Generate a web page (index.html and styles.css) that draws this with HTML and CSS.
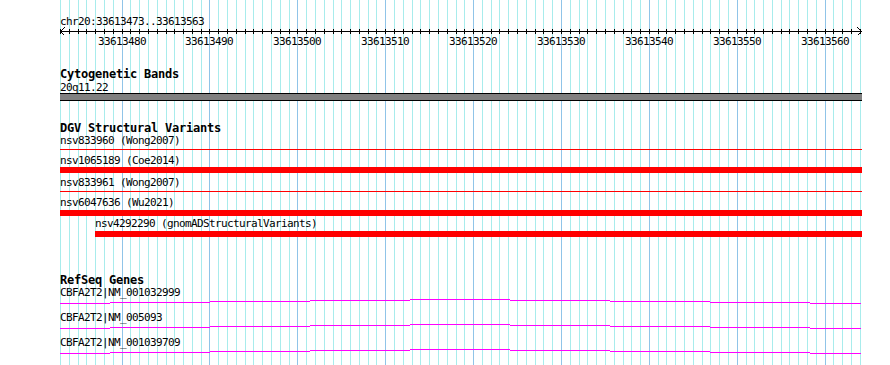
FILE: index.html
```html
<!DOCTYPE html>
<html lang="en">
<head>
<meta charset="UTF-8">
<title>chr20:33613473..33613563</title>
<link rel="stylesheet" href="styles.css">
</head>
<body>
<div class="panel">
  <!-- grid lines, one per base; filled in by script.js -->
  <svg class="grid" width="802" height="365"></svg>

  <svg class="ruler" width="802" height="50">
    <text class="ruler-title" x="0" y="25">chr20:33613473..33613563</text>
    <path class="axis" d="M0 31.5H801M4.5 27.5L0.5 31.5L4.5 35.5M797.5 27.5L801.5 31.5L797.5 35.5"/>
    <g class="ticks"></g>
    <g class="tick-labels">
      <text x="62" y="45">33613480</text>
      <text x="149" y="45">33613490</text>
      <text x="237" y="45">33613500</text>
      <text x="325" y="45">33613510</text>
      <text x="413" y="45">33613520</text>
      <text x="501" y="45">33613530</text>
      <text x="589" y="45">33613540</text>
      <text x="677" y="45">33613550</text>
      <text x="765" y="45">33613560</text>
    </g>
  </svg>

  <section class="track cyto">
    <h2 class="track-title">Cytogenetic Bands</h2>
    <div class="feature-label">20q11.22</div>
    <div class="band"></div>
  </section>

  <section class="track dgv">
    <h2 class="track-title">DGV Structural Variants</h2>
    <div class="sv sv-1">
      <div class="feature-label">nsv833960 (Wong2007)</div>
      <div class="sv-line"></div>
    </div>
    <div class="sv sv-2">
      <div class="feature-label">nsv1065189 (Coe2014)</div>
      <div class="sv-bar"></div>
    </div>
    <div class="sv sv-3">
      <div class="feature-label">nsv833961 (Wong2007)</div>
      <div class="sv-line"></div>
    </div>
    <div class="sv sv-4">
      <div class="feature-label">nsv6047636 (Wu2021)</div>
      <div class="sv-bar"></div>
    </div>
    <div class="sv sv-5">
      <div class="feature-label">nsv4292290 (gnomADStructuralVariants)</div>
      <div class="sv-bar"></div>
    </div>
  </section>

  <section class="track refseq">
    <h2 class="track-title">RefSeq Genes</h2>
    <div class="gene">
      <div class="feature-label">CBFA2T2|NM_001032999</div>
      <svg class="intron" width="802" height="12"><path d="M0 4.5H50M50 3.5H150M150 2.5H250M250 1.5H350M350 0.5H450M450 1.5H550M550 2.5H650M650 3.5H750M750 4.5H801"/></svg>
    </div>
    <div class="gene">
      <div class="feature-label">CBFA2T2|NM_005093</div>
      <svg class="intron" width="802" height="12"><path d="M0 4.5H50M50 3.5H150M150 2.5H250M250 1.5H350M350 0.5H450M450 1.5H550M550 2.5H650M650 3.5H750M750 4.5H801"/></svg>
    </div>
    <div class="gene">
      <div class="feature-label">CBFA2T2|NM_001039709</div>
      <svg class="intron" width="802" height="12"><path d="M0 4.5H50M50 3.5H150M150 2.5H250M250 1.5H350M350 0.5H450M450 1.5H550M550 2.5H650M650 3.5H750M750 4.5H801"/></svg>
    </div>
  </section>
</div>
<script src="script.js"></script>
</body>
</html>
```

FILE: styles.css
```css
body {
  margin: 0;
  background: #fff;
  color: #000;
  font-family: 'DejaVu Sans Mono', 'Liberation Mono', monospace;
}
.panel {
  position: relative;
  z-index: 0;
  width: 802px;
  height: 365px;
  margin-left: 60px;
  overflow: hidden;
}
.grid {
  position: absolute;
  top: 0;
  left: 0;
  z-index: -1;
  shape-rendering: crispEdges;
}
.grid .minor { stroke: #a8ecec; }
.grid .major { stroke: #90c4e8; }

/* ruler */
.ruler {
  display: block;
  shape-rendering: crispEdges;
}
.ruler text {
  font-family: 'DejaVu Sans Mono', monospace;
  font-size: 11px;
  letter-spacing: -0.62px;
  fill: #000;
}
.tick-labels text { text-anchor: middle; }
.axis, .ticks path {
  fill: none;
  stroke: #000;
  stroke-width: 1;
}

/* tracks */
.track-title {
  margin: 0;
  font-size: 12px;
  font-weight: bold;
  line-height: 12px;
  letter-spacing: -0.22px;
}
.feature-label {
  font-size: 11px;
  line-height: 13px;
  letter-spacing: -0.62px;
  white-space: nowrap;
}

.cyto { margin-top: 18px; }
.cyto .feature-label {
  height: 12px;
  margin-top: 1px;
}
.band {
  height: 6px;
  background: #808080;
  border-top: 1px solid #000;
  border-bottom: 1px solid #000;
}

.dgv { margin-top: 21px; }
.sv-2 { margin-top: 4px; }
.sv-3 { margin-top: 3px; }
.sv-4 { margin-top: 4px; }
.sv-5 { margin-top: 1px; margin-left: 35px; }
.sv-line {
  height: 1px;
  margin-top: 2px;
  background: #f00;
}
.sv-bar {
  height: 6px;
  background: #f00;
}
.sv-4 .sv-bar, .sv-5 .sv-bar { margin-top: 1px; }

.refseq { margin-top: 37px; }
.intron {
  display: block;
  shape-rendering: crispEdges;
}
.intron path {
  fill: none;
  stroke: #f0f;
  stroke-width: 1;
}
```

FILE: script.js
```js
// one grid line and one ruler tick per base, 33613473..33613564
var START = 33613473;
var BASES = 92;
var STEP = 8.7875;
var NS = 'http://www.w3.org/2000/svg';

var grid = document.querySelector('.grid');
var ticks = document.querySelector('.ticks');

function vline(parent, x, y1, y2, cls) {
  var p = document.createElementNS(NS, 'path');
  p.setAttribute('d', 'M' + x + ' ' + y1 + 'V' + y2);
  if (cls) p.setAttribute('class', cls);
  parent.appendChild(p);
}

for (var i = 0; i < BASES; i++) {
  var x = Math.floor(0.6 + i * STEP) + 0.5;
  var major = (START + i) % 10 === 0;
  vline(grid, x, 0, 365, major ? 'major' : 'minor');
  vline(ticks, x, 29, 34);
}
```
